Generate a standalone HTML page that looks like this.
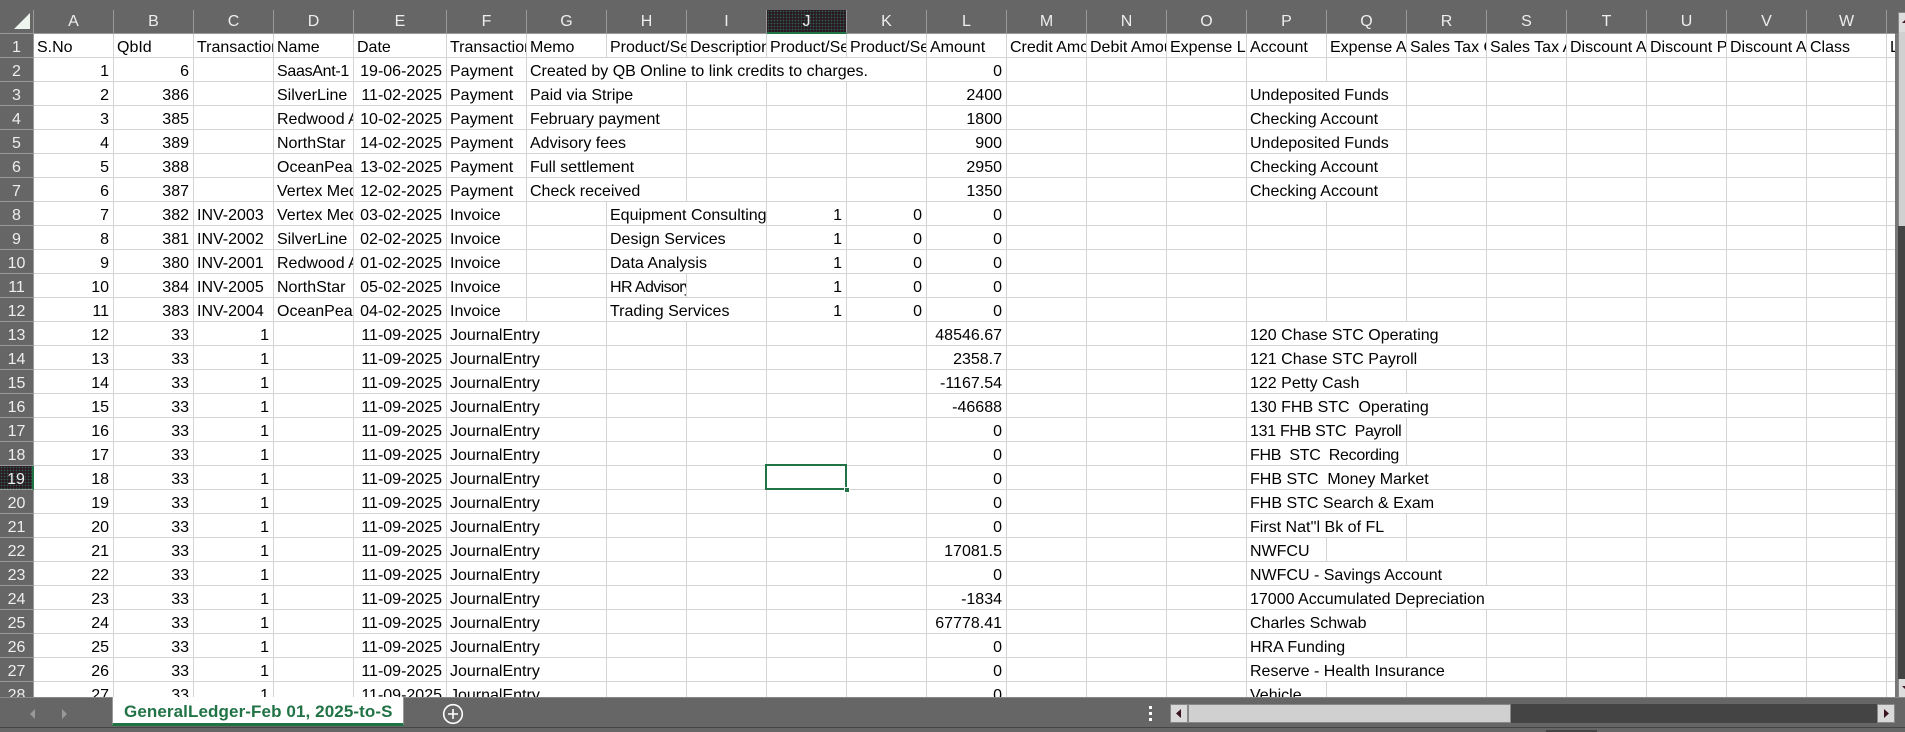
<!DOCTYPE html>
<html><head><meta charset="utf-8"><title>GeneralLedger</title>
<style>
html,body{margin:0;padding:0;width:1905px;height:732px;overflow:hidden;background:#666;font-family:"Liberation Sans",Arial,sans-serif}
#w{position:absolute;left:0;top:10px;width:1895px;height:687px;overflow:hidden}
table{border-collapse:separate;border-spacing:0;table-layout:fixed;width:1967px;font-size:16px;color:#000}
td{box-sizing:border-box;height:24px;padding:5px 3px 0 3px;border-right:1px solid #d4d4d4;border-bottom:1px solid #d4d4d4;background:#fff;overflow:hidden;white-space:pre;line-height:18px;text-align:left;vertical-align:top}
td.n{text-align:right;padding:5px 4px 0 0}
td.t{letter-spacing:-.3px}
th{box-sizing:border-box;height:24px;padding:4px 0 0 0;font-weight:400;background:#666;color:#eee;border-right:1px solid #999;border-bottom:1px solid #999;overflow:hidden;text-align:center;line-height:19px;vertical-align:top}
tr:first-child th{padding-top:1px;line-height:21px}
th.s{background:#2a1a24 radial-gradient(#2f5f4a .7px,transparent .9px) 0 0/3px 3px}
th.c{border-bottom:2px solid #217346}
th.rr{border-right:2px solid #217346}
#sel{position:absolute;left:765px;top:464px;width:78px;height:22px;border:2px solid #217346}
#h{position:absolute;left:844px;top:487px;width:4px;height:4px;background:#217346;border:1px solid #fff}
.a{position:absolute}
</style></head><body>
<div id="w"><table>
<colgroup><col style="width:34px"><col style="width:80px"><col style="width:80px"><col style="width:80px"><col style="width:80px"><col style="width:93px"><col style="width:80px"><col style="width:80px"><col style="width:80px"><col style="width:80px"><col style="width:80px"><col style="width:80px"><col style="width:80px"><col style="width:80px"><col style="width:80px"><col style="width:80px"><col style="width:80px"><col style="width:80px"><col style="width:80px"><col style="width:80px"><col style="width:80px"><col style="width:80px"><col style="width:80px"><col style="width:80px"><col style="width:80px"></colgroup>
<tr><th></th><th>A</th><th>B</th><th>C</th><th>D</th><th>E</th><th>F</th><th>G</th><th>H</th><th>I</th><th class="s c">J</th><th>K</th><th>L</th><th>M</th><th>N</th><th>O</th><th>P</th><th>Q</th><th>R</th><th>S</th><th>T</th><th>U</th><th>V</th><th>W</th><th></th></tr>
<tr><th>1</th><td>S.No</td><td>QbId</td><td>Transaction No</td><td>Name</td><td>Date</td><td>Transaction Type</td><td>Memo</td><td>Product/Service</td><td>Description</td><td>Product/Service Qty</td><td>Product/Service Rate</td><td>Amount</td><td>Credit Amount</td><td>Debit Amount</td><td>Expense Line</td><td>Account</td><td>Expense Account</td><td>Sales Tax Code</td><td>Sales Tax Amount</td><td>Discount Amount</td><td>Discount Percent</td><td>Discount Account</td><td>Class</td><td>Location</td></tr>
<tr><th>2</th><td class="n">1</td><td class="n">6</td><td></td><td class="t">SaasAnt-1</td><td class="n">19-06-2025</td><td>Payment</td><td colspan="5">Created by QB Online to link credits to charges.</td><td class="n">0</td><td></td><td></td><td></td><td></td><td></td><td></td><td></td><td></td><td></td><td></td><td></td><td></td></tr>
<tr><th>3</th><td class="n">2</td><td class="n">386</td><td></td><td>SilverLine LLC</td><td class="n">11-02-2025</td><td>Payment</td><td colspan="2">Paid via Stripe</td><td></td><td></td><td></td><td class="n">2400</td><td></td><td></td><td></td><td colspan="2">Undeposited Funds</td><td></td><td></td><td></td><td></td><td></td><td></td><td></td></tr>
<tr><th>4</th><td class="n">3</td><td class="n">385</td><td></td><td>Redwood Associates</td><td class="n">10-02-2025</td><td>Payment</td><td colspan="2">February payment</td><td></td><td></td><td></td><td class="n">1800</td><td></td><td></td><td></td><td colspan="2">Checking Account</td><td></td><td></td><td></td><td></td><td></td><td></td><td></td></tr>
<tr><th>5</th><td class="n">4</td><td class="n">389</td><td></td><td>NorthStar</td><td class="n">14-02-2025</td><td>Payment</td><td colspan="2">Advisory fees</td><td></td><td></td><td></td><td class="n">900</td><td></td><td></td><td></td><td colspan="2">Undeposited Funds</td><td></td><td></td><td></td><td></td><td></td><td></td><td></td></tr>
<tr><th>6</th><td class="n">5</td><td class="n">388</td><td></td><td>OceanPeak Trading</td><td class="n">13-02-2025</td><td>Payment</td><td colspan="2">Full settlement</td><td></td><td></td><td></td><td class="n">2950</td><td></td><td></td><td></td><td colspan="2">Checking Account</td><td></td><td></td><td></td><td></td><td></td><td></td><td></td></tr>
<tr><th>7</th><td class="n">6</td><td class="n">387</td><td></td><td>Vertex Media</td><td class="n">12-02-2025</td><td>Payment</td><td colspan="2">Check received</td><td></td><td></td><td></td><td class="n">1350</td><td></td><td></td><td></td><td colspan="2">Checking Account</td><td></td><td></td><td></td><td></td><td></td><td></td><td></td></tr>
<tr><th>8</th><td class="n">7</td><td class="n">382</td><td>INV-2003</td><td>Vertex Media</td><td class="n">03-02-2025</td><td>Invoice</td><td></td><td colspan="2">Equipment Consulting</td><td class="n">1</td><td class="n">0</td><td class="n">0</td><td></td><td></td><td></td><td></td><td></td><td></td><td></td><td></td><td></td><td></td><td></td><td></td></tr>
<tr><th>9</th><td class="n">8</td><td class="n">381</td><td>INV-2002</td><td>SilverLine LLC</td><td class="n">02-02-2025</td><td>Invoice</td><td></td><td colspan="2">Design Services</td><td class="n">1</td><td class="n">0</td><td class="n">0</td><td></td><td></td><td></td><td></td><td></td><td></td><td></td><td></td><td></td><td></td><td></td><td></td></tr>
<tr><th>10</th><td class="n">9</td><td class="n">380</td><td>INV-2001</td><td>Redwood Associates</td><td class="n">01-02-2025</td><td>Invoice</td><td></td><td colspan="2">Data Analysis</td><td class="n">1</td><td class="n">0</td><td class="n">0</td><td></td><td></td><td></td><td></td><td></td><td></td><td></td><td></td><td></td><td></td><td></td><td></td></tr>
<tr><th>11</th><td class="n">10</td><td class="n">384</td><td>INV-2005</td><td>NorthStar</td><td class="n">05-02-2025</td><td>Invoice</td><td></td><td style="letter-spacing:-.6px">HR Advisory</td><td></td><td class="n">1</td><td class="n">0</td><td class="n">0</td><td></td><td></td><td></td><td></td><td></td><td></td><td></td><td></td><td></td><td></td><td></td><td></td></tr>
<tr><th>12</th><td class="n">11</td><td class="n">383</td><td>INV-2004</td><td>OceanPeak Trading</td><td class="n">04-02-2025</td><td>Invoice</td><td></td><td colspan="2">Trading Services</td><td class="n">1</td><td class="n">0</td><td class="n">0</td><td></td><td></td><td></td><td></td><td></td><td></td><td></td><td></td><td></td><td></td><td></td><td></td></tr>
<tr><th>13</th><td class="n">12</td><td class="n">33</td><td class="n">1</td><td></td><td class="n">11-09-2025</td><td colspan="2">JournalEntry</td><td></td><td></td><td></td><td></td><td class="n">48546.67</td><td></td><td></td><td></td><td colspan="3">120 Chase STC Operating</td><td></td><td></td><td></td><td></td><td></td><td></td></tr>
<tr><th>14</th><td class="n">13</td><td class="n">33</td><td class="n">1</td><td></td><td class="n">11-09-2025</td><td colspan="2">JournalEntry</td><td></td><td></td><td></td><td></td><td class="n">2358.7</td><td></td><td></td><td></td><td colspan="3">121 Chase STC Payroll</td><td></td><td></td><td></td><td></td><td></td><td></td></tr>
<tr><th>15</th><td class="n">14</td><td class="n">33</td><td class="n">1</td><td></td><td class="n">11-09-2025</td><td colspan="2">JournalEntry</td><td></td><td></td><td></td><td></td><td class="n">-1167.54</td><td></td><td></td><td></td><td colspan="2">122 Petty Cash</td><td></td><td></td><td></td><td></td><td></td><td></td><td></td></tr>
<tr><th>16</th><td class="n">15</td><td class="n">33</td><td class="n">1</td><td></td><td class="n">11-09-2025</td><td colspan="2">JournalEntry</td><td></td><td></td><td></td><td></td><td class="n">-46688</td><td></td><td></td><td></td><td colspan="3">130 FHB STC  Operating</td><td></td><td></td><td></td><td></td><td></td><td></td></tr>
<tr><th>17</th><td class="n">16</td><td class="n">33</td><td class="n">1</td><td></td><td class="n">11-09-2025</td><td colspan="2">JournalEntry</td><td></td><td></td><td></td><td></td><td class="n">0</td><td></td><td></td><td></td><td colspan="2" class="t">131 FHB STC  Payroll</td><td></td><td></td><td></td><td></td><td></td><td></td><td></td></tr>
<tr><th>18</th><td class="n">17</td><td class="n">33</td><td class="n">1</td><td></td><td class="n">11-09-2025</td><td colspan="2">JournalEntry</td><td></td><td></td><td></td><td></td><td class="n">0</td><td></td><td></td><td></td><td colspan="2" class="t">FHB  STC  Recording</td><td></td><td></td><td></td><td></td><td></td><td></td><td></td></tr>
<tr><th class="s rr">19</th><td class="n">18</td><td class="n">33</td><td class="n">1</td><td></td><td class="n">11-09-2025</td><td colspan="2">JournalEntry</td><td></td><td></td><td></td><td></td><td class="n">0</td><td></td><td></td><td></td><td colspan="3">FHB STC  Money Market</td><td></td><td></td><td></td><td></td><td></td><td></td></tr>
<tr><th>20</th><td class="n">19</td><td class="n">33</td><td class="n">1</td><td></td><td class="n">11-09-2025</td><td colspan="2">JournalEntry</td><td></td><td></td><td></td><td></td><td class="n">0</td><td></td><td></td><td></td><td colspan="3">FHB STC Search &amp; Exam</td><td></td><td></td><td></td><td></td><td></td><td></td></tr>
<tr><th>21</th><td class="n">20</td><td class="n">33</td><td class="n">1</td><td></td><td class="n">11-09-2025</td><td colspan="2">JournalEntry</td><td></td><td></td><td></td><td></td><td class="n">0</td><td></td><td></td><td></td><td colspan="2">First Nat''l Bk of FL</td><td></td><td></td><td></td><td></td><td></td><td></td><td></td></tr>
<tr><th>22</th><td class="n">21</td><td class="n">33</td><td class="n">1</td><td></td><td class="n">11-09-2025</td><td colspan="2">JournalEntry</td><td></td><td></td><td></td><td></td><td class="n">17081.5</td><td></td><td></td><td></td><td>NWFCU</td><td></td><td></td><td></td><td></td><td></td><td></td><td></td><td></td></tr>
<tr><th>23</th><td class="n">22</td><td class="n">33</td><td class="n">1</td><td></td><td class="n">11-09-2025</td><td colspan="2">JournalEntry</td><td></td><td></td><td></td><td></td><td class="n">0</td><td></td><td></td><td></td><td colspan="3">NWFCU - Savings Account</td><td></td><td></td><td></td><td></td><td></td><td></td></tr>
<tr><th>24</th><td class="n">23</td><td class="n">33</td><td class="n">1</td><td></td><td class="n">11-09-2025</td><td colspan="2">JournalEntry</td><td></td><td></td><td></td><td></td><td class="n">-1834</td><td></td><td></td><td></td><td colspan="4">17000 Accumulated Depreciation</td><td></td><td></td><td></td><td></td><td></td></tr>
<tr><th>25</th><td class="n">24</td><td class="n">33</td><td class="n">1</td><td></td><td class="n">11-09-2025</td><td colspan="2">JournalEntry</td><td></td><td></td><td></td><td></td><td class="n">67778.41</td><td></td><td></td><td></td><td colspan="2">Charles Schwab</td><td></td><td></td><td></td><td></td><td></td><td></td><td></td></tr>
<tr><th>26</th><td class="n">25</td><td class="n">33</td><td class="n">1</td><td></td><td class="n">11-09-2025</td><td colspan="2">JournalEntry</td><td></td><td></td><td></td><td></td><td class="n">0</td><td></td><td></td><td></td><td colspan="2">HRA Funding</td><td></td><td></td><td></td><td></td><td></td><td></td><td></td></tr>
<tr><th>27</th><td class="n">26</td><td class="n">33</td><td class="n">1</td><td></td><td class="n">11-09-2025</td><td colspan="2">JournalEntry</td><td></td><td></td><td></td><td></td><td class="n">0</td><td></td><td></td><td></td><td colspan="3">Reserve - Health Insurance</td><td></td><td></td><td></td><td></td><td></td><td></td></tr>
<tr><th>28</th><td class="n">27</td><td class="n">33</td><td class="n">1</td><td></td><td class="n">11-09-2025</td><td colspan="2">JournalEntry</td><td></td><td></td><td></td><td></td><td class="n">0</td><td></td><td></td><td></td><td>Vehicle</td><td></td><td></td><td></td><td></td><td></td><td></td><td></td><td></td></tr>
</table></div>
<svg class="a" style="left:0;top:0" width="34" height="34"><polygon points="14,29 30,13 30,29" fill="#eef5ee"/></svg>
<div id="sel"></div><div id="h"></div>
<div class="a" style="left:1895px;top:33px;width:3px;height:664px;background:#777"></div>
<div class="a" style="left:1898px;top:12px;width:7px;height:20px;background:#ddd;border-top:1px solid #888;border-left:1px solid #888;box-sizing:border-box"></div>
<svg class="a" style="left:1898px;top:12px" width="7" height="20"><polygon points="4,11 7,8 7,11" fill="#3a1520"/></svg>
<div class="a" style="left:1898px;top:32px;width:7px;height:194px;background:#d0d0d0;border-left:1px solid #888;box-sizing:border-box"></div>
<div class="a" style="left:1898px;top:226px;width:7px;height:453px;background:#444"></div>
<div class="a" style="left:1898px;top:679px;width:7px;height:18px;background:#ddd;border-left:1px solid #888;box-sizing:border-box"></div>
<svg class="a" style="left:1898px;top:679px" width="7" height="18"><polygon points="4,7 7,7 7,10" fill="#3a1520"/></svg>
<div class="a" style="left:0;top:697px;width:1905px;height:1px;background:#888"></div>
<div class="a" style="left:112px;top:697px;width:292px;height:29px;background:#fff;box-sizing:border-box;border-left:1px solid #999;border-right:1px solid #999;border-bottom:3px solid #217346;color:#217346;font-weight:700;font-size:17px;letter-spacing:.1px;line-height:29px;white-space:pre;padding-left:11px;overflow:hidden">GeneralLedger-Feb 01, 2025-to-S</div>
<svg class="a" style="left:25px;top:705px" width="50" height="18"><polygon points="10,4 5,9 10,14" fill="#999"/><polygon points="37,4 42,9 37,14" fill="#999"/></svg>
<svg class="a" style="left:441px;top:702px" width="24" height="24"><circle cx="12" cy="12" r="9.3" fill="none" stroke="#fff" stroke-width="1.6"/><path d="M12 7v10M7 12h10" stroke="#fff" stroke-width="1.6"/></svg>
<svg class="a" style="left:1149px;top:706px" width="6" height="16"><rect x="0" y="0" width="3" height="3" fill="#fff"/><rect x="0" y="6" width="3" height="3" fill="#fff"/><rect x="0" y="12" width="3" height="3" fill="#fff"/></svg>
<div class="a" style="left:1170px;top:704px;width:724px;height:19px;background:#444"></div>
<div class="a" style="left:1170px;top:704px;width:18px;height:19px;background:#d9d9d9;border:1px solid #888;box-sizing:border-box"></div>
<div class="a" style="left:1188px;top:704px;width:323px;height:19px;background:#d0d0d0;border:1px solid #888;box-sizing:border-box"></div>
<div class="a" style="left:1877px;top:704px;width:18px;height:19px;background:#d9d9d9;border:1px solid #888;box-sizing:border-box"></div>
<svg class="a" style="left:1170px;top:704px" width="18" height="19"><polygon points="11,5 6,9.5 11,14" fill="#3a1520"/></svg>
<svg class="a" style="left:1877px;top:704px" width="18" height="19"><polygon points="7,5 12,9.5 7,14" fill="#3a1520"/></svg>
<div class="a" style="left:0;top:727px;width:1905px;height:1px;background:#444"></div>
<div class="a" style="left:1546px;top:730px;width:51px;height:2px;background:#444"></div>
</body></html>
